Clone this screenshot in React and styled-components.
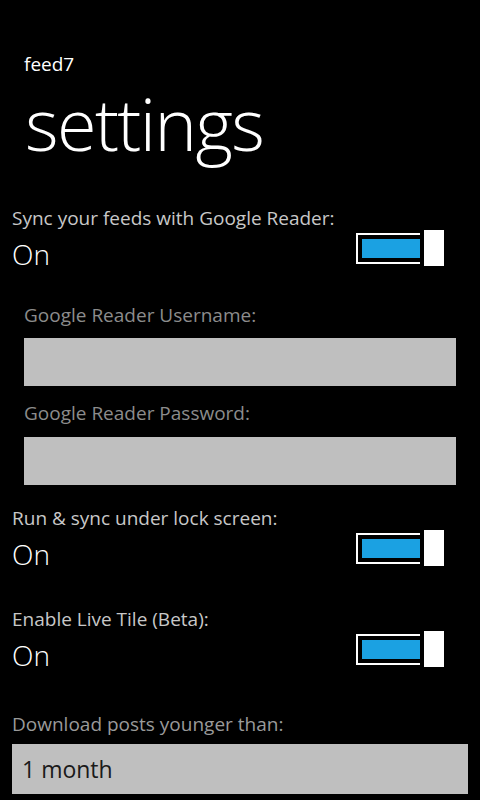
import styled, { createGlobalStyle } from "styled-components";

const GlobalStyle = createGlobalStyle`
  html, body {
    margin: 0;
    padding: 0;
    background: #000;
  }
  body {
    font-family: "Open Sans", "Noto Sans", sans-serif;
    color: #fff;
  }
`;

const Page = styled.div`
  width: 480px;
  height: 800px;
  overflow: hidden;
  background: #000;
  display: flex;
  flex-direction: column;
`;

const Header = styled.header`
  padding: 52px 0 0 24px;
  display: flex;
  flex-direction: column;
`;

const AppName = styled.div`
  font-size: 19px;
  line-height: 24px;
  font-weight: 400;
`;

const PageTitle = styled.h1`
  margin: 7px 0 0 1px;
  font-size: 72px;
  line-height: 80px;
  font-weight: 300;
  letter-spacing: -1.6px;
`;

const Section = styled.section`
  margin-top: ${(p) => p.$top}px;
  padding: 0 ${(p) => p.$inset}px;
  display: flex;
  flex-direction: column;
`;

const Label = styled.div`
  font-size: 19px;
  line-height: 24px;
  color: ${(p) => p.$color || "#c8c8c8"};
`;

const ValueRow = styled.div`
  display: flex;
  align-items: flex-end;
  justify-content: space-between;
  padding-right: 24px;
`;

const Value = styled.div`
  font-size: 28px;
  line-height: 36px;
  font-weight: 300;
`;

const Switch = styled.div`
  display: flex;
  align-items: center;
  gap: 4px;
  height: 36px;
  margin-bottom: 6px;
`;

const Track = styled.div`
  box-sizing: border-box;
  width: 64px;
  height: 31px;
  border: 2px solid #fff;
  border-right: none;
  padding: 4px 0 4px 4px;
`;

const Fill = styled.div`
  height: 100%;
  background: #1ba1e2;
`;

const Thumb = styled.div`
  width: 20px;
  height: 36px;
  background: #fff;
`;

const TextBox = styled.div`
  margin-top: ${(p) => p.$top}px;
  height: ${(p) => p.$height}px;
  background: #bfbfbf;
  display: flex;
  align-items: center;
  padding-left: 10px;
  color: #1a1a1a;
  font-size: 23px;
`;

function ToggleSetting({ label, top }) {
  return (
    <Section $top={top} $inset={12}>
      <Label>{label}</Label>
      <ValueRow>
        <Value>On</Value>
        <Switch>
          <Track>
            <Fill />
          </Track>
          <Thumb />
        </Switch>
      </ValueRow>
    </Section>
  );
}

export default function App() {
  return (
    <Page>
      <GlobalStyle />
      <Header>
        <AppName>feed7</AppName>
        <PageTitle>settings</PageTitle>
      </Header>

      <ToggleSetting top={43} label="Sync your feeds with Google Reader:" />

      <Section $top={31} $inset={24}>
        <Label $color="#8c8c8c">Google Reader Username:</Label>
        <TextBox $top={11} $height={48} />
        <Label $color="#8c8c8c" style={{ marginTop: 15 }}>
          Google Reader Password:
        </Label>
        <TextBox $top={12} $height={48} />
      </Section>

      <ToggleSetting top={21} label="Run & sync under lock screen:" />
      <ToggleSetting top={35} label="Enable Live Tile (Beta):" />

      <Section $top={39} $inset={12}>
        <Label $color="#9a9a9a">Download posts younger than:</Label>
        <TextBox $top={8} $height={50}>1 month</TextBox>
      </Section>
    </Page>
  );
}
